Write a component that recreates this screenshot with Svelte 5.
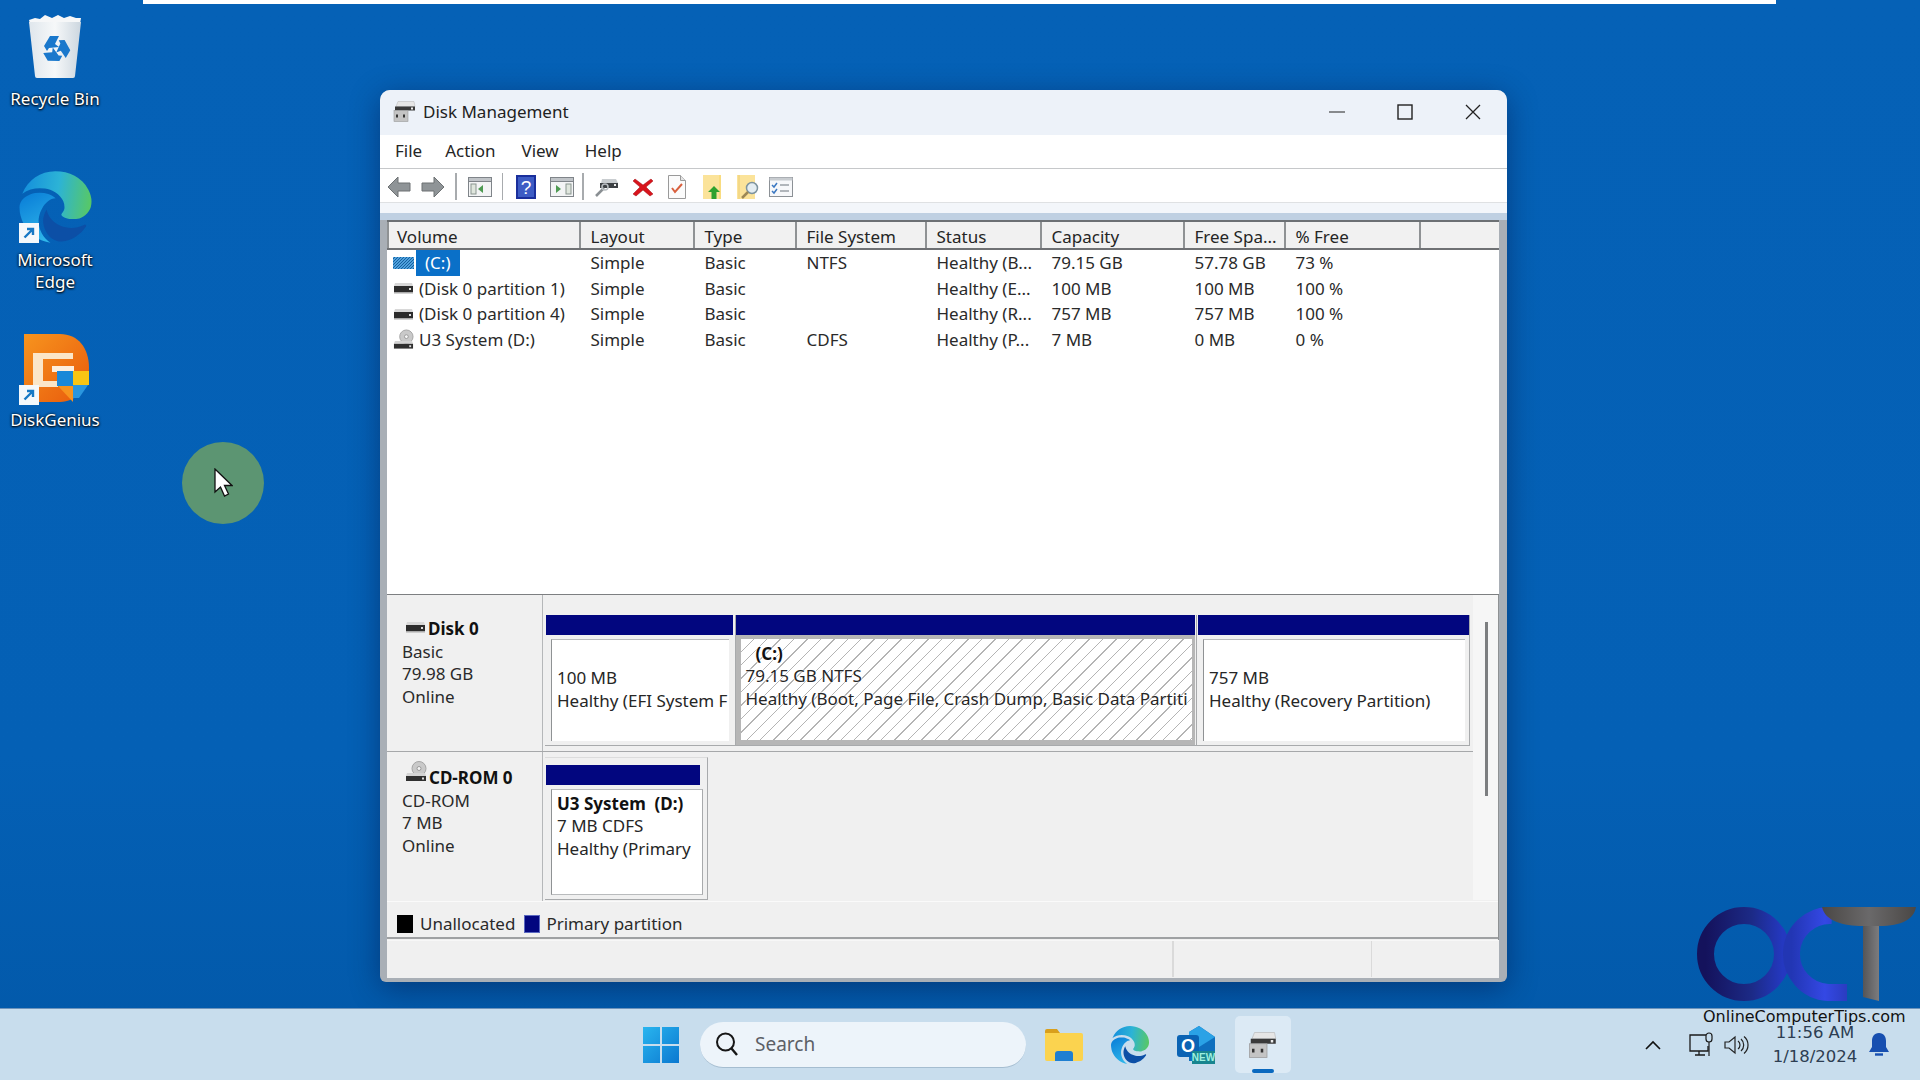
<script>
  const cols = [
    { name: 'Volume', w: 193.5 }, { name: 'Layout', w: 114 }, { name: 'Type', w: 102 },
    { name: 'File System', w: 130 }, { name: 'Status', w: 115 }, { name: 'Capacity', w: 143 },
    { name: 'Free Spa...', w: 101 }, { name: '% Free', w: 135 }
  ];
  const rows = [
    { icon: 'sel', vol: '(C:)', cells: ['Simple', 'Basic', 'NTFS', 'Healthy (B...', '79.15 GB', '57.78 GB', '73 %'] },
    { icon: 'disk', vol: '(Disk 0 partition 1)', cells: ['Simple', 'Basic', '', 'Healthy (E...', '100 MB', '100 MB', '100 %'] },
    { icon: 'disk', vol: '(Disk 0 partition 4)', cells: ['Simple', 'Basic', '', 'Healthy (R...', '757 MB', '757 MB', '100 %'] },
    { icon: 'cd', vol: 'U3 System (D:)', cells: ['Simple', 'Basic', 'CDFS', 'Healthy (P...', '7 MB', '0 MB', '0 %'] }
  ];
  const gridCols = cols.map((c) => c.w + 'px').join(' ') + ' 1fr';
</script>

{#snippet diskIcon()}
  <svg class="ico" width="21" height="14" viewBox="0 0 21 14"><path d="M2 2h17l1 3H1z" fill="#d8d8d8"/><rect x="1" y="5" width="19" height="6" fill="#2c2c2c"/><rect x="16" y="7" width="2" height="2" fill="#ddd"/><rect x="1" y="11" width="19" height="1.5" fill="#aaa"/></svg>
{/snippet}
{#snippet cdIcon()}
  <svg class="ico" width="22" height="22" viewBox="0 0 22 22"><circle cx="14" cy="7.5" r="7" fill="#c9c9c9" stroke="#a5a5a5"/><circle cx="14" cy="7.5" r="2" fill="#f5f5f5" stroke="#999"/><path d="M2 12h18l1 3H1z" fill="#d4d4d4"/><rect x="1" y="15" width="20" height="5" fill="#303030"/><rect x="17" y="16.5" width="2" height="2" fill="#ddd"/></svg>
{/snippet}
{#snippet shortcut()}
  <svg class="shortcut" viewBox="0 0 20 20"><rect width="20" height="20" fill="#f4f8fb"/><path d="M5.500 14.500 L13.500 6.500 M8 6h6v6" fill="none" stroke="#1678c4" stroke-width="2.400"/></svg>
{/snippet}
{#snippet edgeIcon(id)}
  <svg viewBox="0 0 24 24" width="100%" height="100%">
    <defs>
      <linearGradient id="top{id}" x1="0" y1="0.5" x2="1" y2="0.6"><stop offset="0" stop-color="#1590dc"/><stop offset="0.5" stop-color="#2cb3d6"/><stop offset="1" stop-color="#58c865"/></linearGradient>
      <linearGradient id="lft{id}" x1="0.2" y1="0" x2="0.6" y2="1"><stop offset="0" stop-color="#0a7fd8"/><stop offset="1" stop-color="#2fb6ea"/></linearGradient>
    </defs>
    <path fill="#0c4fa6" d="M21.860 17.860q.14 0 .25.12.1.13.1.25t-.11.33l-.32.46-.43.53-.44.5q-.21.25-.38.42l-.22.23q-.58.53-1.340 1.040-.76.51-1.600.91-.86.4-1.740.64t-1.670.24q-.9 0-1.690-.28-.8-.28-1.480-.78-.68-.5-1.220-1.170-.53-.66-.92-1.440-.38-.77-.58-1.600-.2-.83-.2-1.670 0-1 .32-1.960.33-.97.87-1.800.14.95.55 1.770.41.82 1.020 1.500.6.68 1.380 1.210.78.54 1.640.9.86.36 1.770.56.92.2 1.800.2 1.120 0 2.180-.24 1.060-.23 2.060-.72l.2-.1.2-.05z"/>
    <path fill="url(#lft{id})" d="M6.360 16.590q0 1.100.27 2.150.27 1.060.78 2.030.51.96 1.240 1.770.74.82 1.660 1.400-1.470-.2-2.800-.74-1.330-.55-2.480-1.370-1.150-.83-2.080-1.900-.92-1.070-1.580-2.330T.36 14.940Q0 13.540 0 12.060q0-.81.32-1.490.31-.68.83-1.230.53-.55 1.200-.96.66-.4 1.350-.66.74-.27 1.500-.39.78-.12 1.550-.12.7 0 1.420.1.72.12 1.400.35.68.23 1.320.57.63.35 1.160.83-.35 0-.7.07-.33.07-.65.23v-.02q-.63.28-1.200.74-.57.46-1.050 1.040-.48.58-.87 1.260-.38.67-.65 1.390-.27.71-.42 1.440-.15.72-.15 1.380z"/>
    <path fill="url(#top{id})" d="M11.960.06q1.700 0 3.330.39 1.630.38 3.070 1.150 1.430.77 2.620 1.930 1.180 1.160 1.980 2.700.49.94.76 1.960.28 1 .28 2.080 0 .89-.23 1.700-.24.8-.69 1.480-.45.68-1.100 1.220-.64.53-1.450.88-.54.24-1.110.36-.58.13-1.160.13-.42 0-.97-.03-.54-.03-1.100-.12-.55-.1-1.050-.28-.5-.19-.84-.5-.12-.09-.23-.24-.1-.16-.1-.33 0-.15.16-.35.16-.2.35-.5.2-.28.36-.68.16-.4.16-.95 0-1.060-.4-1.960-.4-.91-1.060-1.640-.66-.74-1.520-1.280-.86-.55-1.790-.89-.84-.3-1.720-.44-.87-.14-1.760-.14-1.550 0-3.060.45T.94 7.550q.71-1.740 1.810-3.130 1.100-1.380 2.520-2.350Q6.680 1.100 8.370.58q1.700-.52 3.580-.52z"/>
  </svg>
{/snippet}
{#snippet mmcIcon(w, h)}
  <svg width={w} height={h} viewBox="0 0 24 22">
    <path d="M6 1h16l1 5H4z" fill="#e6e6e6" stroke="#b5b5b5" stroke-width=".5"/><rect x="3" y="6" width="20" height="4" fill="#3a3a3a"/><rect x="19" y="7" width="2" height="2" fill="#eee"/>
    <rect x="2" y="10" width="14" height="11" fill="#c4c4c4" stroke="#9a9a9a" stroke-width=".6"/><rect x="4" y="14" width="2" height="3" fill="#333"/><rect x="11" y="14" width="2" height="3" fill="#333"/>
  </svg>
{/snippet}

<div class="desktop">
  <div class="topstrip"></div>

  <div class="deskicon recycle">
    <svg class="art" viewBox="0 0 54 64">
      <defs><linearGradient id="bin" x1="0" y1="0" x2="1" y2="0"><stop offset="0" stop-color="#dfe6ec"/><stop offset=".5" stop-color="#f6f8f9"/><stop offset="1" stop-color="#ccd6df"/></linearGradient></defs>
      <path d="M1 6l6-2 5 1 5-4 7 3 6-3 6 3 6-2 6 2 5 0-1 6H2z" fill="#f6f7f8"/>
      <path d="M1 8h52l-6 54a2 2 0 0 1-2 2H9a2 2 0 0 1-2-2z" fill="url(#bin)"/>
      <g transform="translate(28 35)" fill="#1a78cc">
        <path d="M-12 -3 L-6 -13 H3 L-1 -5 L3 -2 L-7 -1 L-9 2z"/>
        <path d="M-12 -3 L-6 -13 H3 L-1 -5 L3 -2 L-7 -1 L-9 2z" transform="rotate(120)"/>
        <path d="M-12 -3 L-6 -13 H3 L-1 -5 L3 -2 L-7 -1 L-9 2z" transform="rotate(240)"/>
      </g>
    </svg>
    <span>Recycle Bin</span>
  </div>

  <div class="deskicon edge">
    <div class="art">{@render edgeIcon('d')}</div>
    {@render shortcut()}
    <span>Microsoft<br />Edge</span>
  </div>

  <div class="deskicon genius">
    <svg class="art" viewBox="0 0 68 70">
      <defs><linearGradient id="dg" x1="0" y1="0" x2="1" y2="1"><stop offset="0" stop-color="#f7941e"/><stop offset="1" stop-color="#e8590c"/></linearGradient></defs>
      <path d="M2 1h36c18 0 29 14 29 34s-13 34-29 34H2z" fill="url(#dg)"/>
      <path d="M11 20h40v6H21v22h15v6H11z" fill="#fbe6c8"/>
      <path d="M30 33h22v6H30z" fill="#fdeedd"/>
      <path d="M35 38h16v15H35z" fill="#1a88d8"/><path d="M51 38h16v14H51z" fill="#f9c514"/><path d="M36 53h15v16z" fill="#f7931e"/><path d="M51 52h15l-9 13h-6z" fill="#2a96de"/>
    </svg>
    {@render shortcut()}
    <span>DiskGenius</span>
  </div>

  <div class="pointer">
    <svg width="20" height="30" viewBox="0 0 20 30"><path d="M2 1v23l5.500-5 4 9 4-2-4-8.500h7.500z" fill="#fff" stroke="#111" stroke-width="1.300"/></svg>
  </div>

  <section class="window">
    <header class="titlebar">
      <span class="titleicon">{@render mmcIcon(24, 23)}</span>
      <span class="title">Disk Management</span>
      <div class="controls">
        <svg width="16" height="16" viewBox="0 0 16 16"><path d="M0 8h16" stroke="#222" stroke-width="1.200"/></svg>
        <svg width="16" height="16" viewBox="0 0 16 16"><rect x="1" y="1" width="14" height="14" fill="none" stroke="#222" stroke-width="1.400"/></svg>
        <svg width="16" height="16" viewBox="0 0 16 16"><path d="M1 1l14 14M15 1L1 15" stroke="#222" stroke-width="1.300"/></svg>
      </div>
    </header>

    <nav class="menubar"><span>File</span><span class="m2">Action</span><span class="m3">View</span><span class="m4">Help</span></nav>

    <div class="toolbar">
      <svg class="t m7" width="24" height="24" viewBox="0 0 24 24"><path d="M1 12L11 2v6h12v8H11v6z" fill="#8f9497" stroke="#6d7173"/></svg>
      <svg class="t m10" width="24" height="24" viewBox="0 0 24 24"><path d="M23 12L13 2v6H1v8h12v6z" fill="#8f9497" stroke="#6d7173"/></svg>
      <i class="sep m10"></i>
      <svg class="t m11" width="24" height="20" viewBox="0 0 24 20"><rect x=".5" y=".5" width="23" height="19" fill="#f3f4f5" stroke="#7f8489"/><rect x=".5" y=".5" width="23" height="4" fill="#c0c4c8" stroke="#7f8489"/><rect x="3" y="7" width="5" height="10" fill="#dfe6dd" stroke="#8a9590"/><path d="M15 8v8l-5-4z" fill="#4e9a52"/></svg>
      <i class="sep m10"></i>
      <svg class="t m13" width="20" height="24" viewBox="0 0 20 24"><rect width="20" height="24" fill="#1a2f9c"/><rect x="2" y="2" width="16" height="20" fill="#3d5cc4"/><text x="10" y="19" text-anchor="middle" font-size="19" fill="#fff" font-family="Liberation Sans">?</text></svg>
      <svg class="t m14" width="24" height="20" viewBox="0 0 24 20"><rect x=".5" y=".5" width="23" height="19" fill="#f3f4f5" stroke="#7f8489"/><rect x=".5" y=".5" width="23" height="4" fill="#c0c4c8" stroke="#7f8489"/><rect x="16" y="7" width="5" height="10" fill="#dfe6dd" stroke="#8a9590"/><path d="M6 8v8l5-4z" fill="#4e9a52"/></svg>
      <i class="sep m8"></i>
      <svg class="t m10" width="24" height="22" viewBox="0 0 24 22"><path d="M8 3h14l2 4v5H6z" fill="#c9cdd0"/><rect x="6" y="7" width="18" height="5" fill="#3e4245"/><rect x="20" y="8" width="2" height="2" fill="#eee"/><path d="M10 12L2 20" stroke="#8a8f93" stroke-width="2.500"/><circle cx="11" cy="11" r="3" fill="none" stroke="#b9bec2" stroke-width="1.500"/></svg>
      <svg class="t m14" width="22" height="22" viewBox="0 0 22 22"><path d="M3 3l8 6 8-6 2 2-7 6 7 7-3 2-7-6-7 6-3-2 7-7-7-6z" fill="#d8141c" stroke="#a00d12" stroke-width=".5"/></svg>
      <svg class="t m14" width="18" height="24" viewBox="0 0 18 24"><path d="M.5.5h12l5 5v18H.5z" fill="#fbfbfb" stroke="#9a9a9a"/><path d="M12.500.5v5h5" fill="#e4e4e4" stroke="#9a9a9a"/><path d="M4 13l3 4 7-8" fill="none" stroke="#d9603e" stroke-width="2"/></svg>
      <svg class="t m17" width="19" height="24" viewBox="0 0 19 24"><path d="M0 0h18v24H0z" fill="#f9dc80"/><path d="M0 0h16v24H0z" fill="#fbe39a"/><path d="M11 11l6 6h-3.500v7h-5v-7H5z" fill="#2ea12f"/></svg>
      <svg class="t m15" width="22" height="24" viewBox="0 0 22 24"><path d="M0 0h18v24H0z" fill="#fbe39a"/><path d="M2 0v24" stroke="#eccd72"/><circle cx="15" cy="13" r="5.500" fill="#e4edf2" stroke="#7e949f" stroke-width="1.500"/><path d="M11 17l-6 6" stroke="#9d8856" stroke-width="2.500"/></svg>
      <svg class="t m10" width="24" height="20" viewBox="0 0 24 20"><rect x=".5" y=".5" width="23" height="19" fill="#f7f8fa" stroke="#8c9196"/><rect x=".5" y=".5" width="23" height="3" fill="#c8ccd0"/><path d="M3 8l2 2 3-4M3 14l2 2 3-4" fill="none" stroke="#3b78c2" stroke-width="1.500"/><path d="M11 8h9M11 14h9" stroke="#9aa0a6" stroke-width="1.400"/></svg>
    </div>

    <div class="toolgap"></div>

    <div class="client">
      <div class="listpane">
        <div class="hdr" style="grid-template-columns:{gridCols}">
          {#each cols as c}<div class="th">{c.name}</div>{/each}<div class="th last"></div>
        </div>
        {#each rows as r}
          <div class="row" style="grid-template-columns:{gridCols}">
            <div class="volcell">
              {#if r.icon === 'sel'}
                <svg class="ico" width="21" height="14" viewBox="0 0 21 14"><defs><pattern id="sl" width="3" height="3" patternUnits="userSpaceOnUse"><rect width="3" height="3" fill="#4ea0dc"/><path d="M0 3L3 0" stroke="#15609f"/></pattern></defs><rect x="0" y="1" width="21" height="12" fill="url(#sl)"/></svg>
                <span class="selected">(C:)</span>
              {:else if r.icon === 'disk'}
                {@render diskIcon()}<span class="vname">{r.vol}</span>
              {:else}
                {@render cdIcon()}<span class="vname">{r.vol}</span>
              {/if}
            </div>
            {#each r.cells as c}<div class="td">{c}</div>{/each}
          </div>
        {/each}
      </div>

      <div class="lower">
        <div class="scrolltrack"><i></i></div>
        <div class="diskrow first">
          <div class="label">
            <div class="lh">{@render diskIcon()}<b>Disk 0</b></div>
            <div>Basic</div><div>79.98 GB</div><div>Online</div>
          </div>
          <div class="segs">
            <div class="seg s1">
              <div class="bar"></div>
              <div class="box plain"><div class="spacer"></div><div>100 MB</div><div>Healthy (EFI System F</div></div>
            </div>
            <div class="seg s2">
              <div class="bar"></div>
              <div class="box hatch"><div class="cname"><b>(C:)</b></div><div>79.15 GB NTFS</div><div>Healthy (Boot, Page File, Crash Dump, Basic Data Partiti</div></div>
            </div>
            <div class="seg s3">
              <div class="bar"></div>
              <div class="box plain"><div class="spacer"></div><div>757 MB</div><div>Healthy (Recovery Partition)</div></div>
            </div>
          </div>
        </div>
        <div class="diskrow second">
          <div class="label">
            <div class="lh">{@render cdIcon()}<b>CD-ROM 0</b></div>
            <div>CD-ROM</div><div>7 MB</div><div>Online</div>
          </div>
          <div class="segs">
            <div class="seg cd">
              <div class="bar"></div>
              <div class="box plain"><div class="uname"><b>U3 System&nbsp; (D:)</b></div><div>7 MB CDFS</div><div>Healthy (Primary</div></div>
            </div>
          </div>
        </div>
        <div class="legend">
          <i class="sw black"></i><span class="l1">Unallocated</span>
          <i class="sw navy"></i><span class="l2">Primary partition</span>
        </div>
      </div>

      <div class="status"><i></i><i></i></div>
    </div>
  </section>

  <svg class="logo" viewBox="0 0 230 110">
    <defs>
      <linearGradient id="o" x1="0" y1="0" x2="1" y2="0"><stop offset="0" stop-color="#14125c"/><stop offset=".6" stop-color="#1c2a86"/><stop offset="1" stop-color="#2438c0"/></linearGradient>
      <linearGradient id="c" x1="0" y1="0" x2="1" y2="0"><stop offset="0" stop-color="#2236b4"/><stop offset=".6" stop-color="#3448e4"/><stop offset="1" stop-color="#2a3cc0"/></linearGradient>
      <linearGradient id="tt" x1="0" y1="0" x2="1" y2="0"><stop offset="0" stop-color="#4a4745"/><stop offset=".5" stop-color="#6a696a"/><stop offset="1" stop-color="#4a4745"/></linearGradient>
      <linearGradient id="ts" x1="0" y1="0" x2="1" y2="0"><stop offset="0" stop-color="#555557"/><stop offset="1" stop-color="#7c7c7e"/></linearGradient>
    </defs>
    <circle cx="47" cy="47" r="38.500" fill="none" stroke="url(#o)" stroke-width="17"/>
    <path d="M135 8.500A38.500 38.500 0 0 0 131 85.500L150 85.500" fill="none" stroke="url(#c)" stroke-width="17"/>
    <path d="M166 16H182V94L166 90z" fill="url(#ts)"/>
    <path d="M125 0H219C217 12 205 19 182 19H166C146 19 128 14 125 0z" fill="url(#tt)"/>
  </svg>
  <div class="wm">OnlineComputerTips.com</div>

  <footer class="taskbar">
    <svg class="start" width="36" height="36" viewBox="0 0 36 36">
      <defs><linearGradient id="w" x1="0" y1="0" x2="1" y2="1"><stop offset="0" stop-color="#29b5ef"/><stop offset="1" stop-color="#0b78d0"/></linearGradient></defs>
      <path d="M0 0h17v17H0zM19 0h17v17H19zM0 19h17v17H0zM19 19h17v17H19z" fill="url(#w)"/>
    </svg>
    <div class="search">
      <svg width="24" height="26" viewBox="0 0 24 26"><circle cx="10.500" cy="11" r="8.500" fill="none" stroke="#161616" stroke-width="2"/><path d="M16.500 17.500L22 24" stroke="#161616" stroke-width="2.400"/></svg>
      <span>Search</span>
    </div>
    <svg class="app a1" width="38" height="32" viewBox="0 0 38 32"><path d="M0 2a2 2 0 0 1 2-2h10l3 4H0z" fill="#d99f1c"/><path d="M0 4h36a2 2 0 0 1 2 2v24a2 2 0 0 1-2 2H2a2 2 0 0 1-2-2z" fill="#fbd34f"/><path d="M10 32v-7a3 3 0 0 1 3-3h12a3 3 0 0 1 3 3v7z" fill="#1f7fd1"/></svg>
    <div class="app a2 edgebar">{@render edgeIcon('t')}</div>
    <svg class="app a2" width="38" height="38" viewBox="0 0 38 38"><path d="M22 0l16 11v18a6 6 0 0 1-6 6H12V6z" fill="#0f6fbe"/><path d="M22 0l16 11-16 10-10-6V6z" fill="#2aa2e6"/><rect x="0" y="9" width="22" height="22" rx="3" fill="#0a63b4"/><text x="11" y="26" text-anchor="middle" font-size="18" font-weight="700" fill="#fff" font-family="Liberation Sans">O</text><rect x="15" y="25" width="23" height="13" fill="#18858f"/><text x="26.500" y="35" text-anchor="middle" font-size="10" font-weight="700" fill="#9ef0e0" font-family="Liberation Sans">NEW</text></svg>
    <div class="active">
      <span class="activeicon">{@render mmcIcon(30, 28)}</span>
      <i></i>
    </div>
    <div class="tray">
      <svg class="chev" width="16" height="10" viewBox="0 0 16 10"><path d="M1 9l7-7 7 7" fill="none" stroke="#111" stroke-width="1.600"/></svg>
      <svg class="net" width="25" height="25" viewBox="0 0 25 25"><path d="M17 3H1v16h18v-5" fill="none" stroke="#1a1a1a" stroke-width="1.300"/><path d="M6 23h10M10 19v4" stroke="#1a1a1a" stroke-width="1.300"/><rect x="17" y="1" width="6" height="9" rx="3" fill="none" stroke="#1a1a1a" stroke-width="1.200"/><path d="M20 10v14" stroke="#1a1a1a" stroke-width="1.200"/></svg>
      <svg class="vol" width="25" height="20" viewBox="0 0 25 20"><path d="M1 7h4l6-5v16l-6-5H1z" fill="none" stroke="#222" stroke-width="1.200"/><path d="M14 6a5 5 0 0 1 0 8M17 4a8 8 0 0 1 0 12M20 1.500a11 11 0 0 1 0 17" fill="none" stroke="#222" stroke-width="1.200"/></svg>
      <div class="clock"><div>11:56 AM</div><div>1/18/2024</div></div>
      <svg class="bell" width="22" height="24" viewBox="0 0 22 24"><path d="M11 0c5 0 7 4 7 8v6l3 5H1l3-5V8c0-4 2-8 7-8z" fill="#174fb0"/><path d="M7 21.500h8" stroke="#174fb0" stroke-width="2.400"/></svg>
    </div>
  </footer>
</div>

<style>
  :global(body) { margin: 0; overflow: hidden; }
  :global(#app) { width: 1920px; height: 1080px; }
  .desktop {
    position: relative; width: 1920px; height: 1080px; overflow: hidden;
    background: linear-gradient(180deg, #0561b6 0%, #0460b5 70%, #0258a8 100%);
    font-family: "Noto Sans", "Open Sans", sans-serif;
  }
  .topstrip { position: absolute; left: 143px; top: 0; width: 1633px; height: 4px; background: #fff; }

  .deskicon { position: absolute; left: 0; color: #fff; font-size: 17px; line-height: 22px; text-align: center; text-shadow: 0 1px 2px #000, 0 0 3px #000; width: 110px; }
  .deskicon span { position: absolute; left: 0; right: 0; }
  .deskicon .art { position: absolute; display: block; }
  .recycle { top: 14px; }
  .recycle .art { left: 28px; top: 0; width: 54px; height: 64px; }
  .recycle span { top: 74px; }
  .edge { top: 171px; }
  .edge .art { left: 19px; top: 0; width: 73px; height: 72px; }
  .edge span { top: 78px; }
  .genius { top: 333px; }
  .genius .art { left: 22px; top: 0; width: 68px; height: 70px; }
  .genius span { top: 76px; }
  .shortcut { position: absolute; left: 19px; top: 52px; width: 20px; height: 20px; }
  .pointer { position: absolute; left: 182px; top: 442px; width: 82px; height: 82px; border-radius: 50%; background: #5c9572; display: flex; align-items: center; justify-content: center; }

  .window {
    position: absolute; left: 380px; top: 90px; width: 1127px; height: 892px;
    border-radius: 10px 10px 6px 6px; overflow: hidden; background: #a9afb6;
    display: flex; flex-direction: column; color: #1b1b1b; font-size: 17px;
    box-shadow: 0 6px 30px rgba(0, 0, 40, .38);
  }
  .titlebar { height: 45px; flex: none; background: #edf2f9; display: flex; align-items: center; padding: 0 0 2px 12px; box-sizing: border-box; }
  .titleicon { display: flex; width: 31px; }
  .title { font-size: 17px; color: #222; }
  .controls { margin-left: auto; display: flex; align-items: center; gap: 52px; padding-right: 26px; }
  .controls svg { display: block; }
  .menubar { height: 34px; flex: none; background: #fff; border-bottom: 1.500px solid #c6c8ca; display: flex; align-items: center; padding: 0 0 2px 15px; box-sizing: border-box; font-size: 17px; color: #252525; }
  .m2 { margin-left: 23px; }
  .m3 { margin-left: 26px; }
  .m4 { margin-left: 26px; }
  .toolbar { height: 34px; flex: none; background: #fff; border-bottom: 1px solid #dfe1e3; display: flex; align-items: center; box-sizing: border-box; padding-top: 2px; }
  .t { display: block; flex: none; }
  .m7 { margin-left: 7px; }
  .m8 { margin-left: 8px; }
  .m10 { margin-left: 10px; }
  .m11 { margin-left: 11px; }
  .m13 { margin-left: 13px; }
  .m14 { margin-left: 14px; }
  .m15 { margin-left: 15px; }
  .m17 { margin-left: 17px; }
  .sep { width: 1.500px; height: 27px; background: #a8abae; flex: none; }
  .toolgap { height: 10px; flex: none; background: #f3f6fa; }
  .client { flex: 1; min-height: 0; display: flex; flex-direction: column; background: linear-gradient(180deg, #bfd0e2 0, #bfd0e2 7px, transparent 7px); padding: 7px 8px 4px 7px; box-sizing: border-box; }

  .listpane { height: 375px; flex: none; background: #fff; overflow: hidden; border-bottom: 1.500px solid #7d7f81; box-sizing: border-box; }
  .hdr { display: grid; height: 30px; box-sizing: border-box; border-top: 2px solid #6c7074; border-bottom: 2px solid #6f7174; background: #f1f1f1; }
  .th { border-right: 2px solid #8f9294; padding-left: 10px; line-height: 29px; white-space: nowrap; overflow: hidden; color: #252525; }
  .th:first-child { border-left: 2px solid #8f9294; padding-left: 8px; }
  .th.last { border-right: 0; }
  .row { display: grid; height: 25.600px; line-height: 25.600px; color: #2a2a2a; }
  .td { padding-left: 10px; white-space: nowrap; overflow: hidden; }
  .volcell { display: flex; align-items: center; padding-left: 6px; position: relative; white-space: nowrap; }
  .ico { display: block; flex: none; }
  .volcell .ico { width: 21px; }
  .selected { background: #0a70c8; color: #fff; margin-left: 2px; padding: 0 5px 0 9px; height: 25.600px; width: 30px; }
  .vname { margin-left: 5px; }

  .lower { flex: 1; min-height: 0; background: #f0f0f0; display: flex; flex-direction: column; position: relative; border-right: 1.500px solid #8f9294; }
  .scrolltrack { position: absolute; right: 0; top: 0; width: 25px; height: 305px; background: #f6f6f6; }
  .scrolltrack i { position: absolute; left: 12px; top: 27px; width: 2.500px; height: 174px; background: #7c7e80; }
  .diskrow { display: flex; height: 150px; flex: none; border-bottom: 1.500px solid #a6a8aa; box-sizing: border-box; margin-right: 24px; }
  .diskrow.first { height: 157px; }
  .first .segs { padding-top: 20px; }
  .label { width: 156px; flex: none; box-sizing: border-box; padding: 15px 0 0 15px; line-height: 22.600px; border-right: 1.500px solid #b5b7b9; color: #2a2a2a; }
  .first .label { padding-top: 23px; }
  .lh { display: flex; align-items: flex-end; gap: 2px; color: #111; font-weight: 700; margin-left: 3px; height: 22.600px; }
  .lh b { font-weight: 700; }
  .lh .ico { margin-bottom: 7px; }
  .segs { display: flex; padding: 19px 0 0 2px; flex: 1; min-width: 0; }
  .seg { flex: none; display: flex; flex-direction: column; height: 131px; box-sizing: border-box; background: #f0f0f0; border-right: 1.500px solid #a8aaac; border-bottom: 1.500px solid #a8aaac; }
  .s1 { width: 190.500px; padding: 0 2px 0 1px; }
  .s2 { width: 461px; padding: 0 1px 0 0; }
  .s3 { width: 273px; padding: 0 0 0 1.500px; }
  .seg.cd { width: 163px; height: 143px; margin-top: -14px; padding: 7px 7px 0 1px; border-top: 1.500px solid #dcdcdc; box-sizing: border-box; }
  .bar { height: 20px; flex: none; background: #02067f; }
  .box { margin: 4px 0 4px 5px; height: 102px; box-sizing: border-box; background: #fff; line-height: 22.800px; padding-left: 5px; overflow: hidden; white-space: nowrap; color: #262626; flex: none; }
  .box.plain { border-left: 1.500px solid #8f9294; border-top: 1.500px solid #b9bbbd; margin-right: 4px; }
  .box.hatch {
    margin: 0; height: 110px; border-style: solid; border-color: #b6b6b6; border-width: 4px 3px 5px 5px; padding: 2px 0 0 5px;
    background: repeating-linear-gradient(135deg, #fff 0, #fff 8.500px, #b4b4b4 8.500px, #b4b4b4 9.500px);
    text-shadow: 0 0 2px #fff, 0 0 2px #fff, 0 0 3px #fff;
  }
  .spacer { height: 27px; }
  .cname { padding: 2px 0 0 10px; height: 24px; box-sizing: border-box; color: #111; }
  .uname { color: #111; padding-top: 2.500px; }
  .seg.cd .box { height: 106px; margin: 4px -3px 0 5px; border-right: 1.500px solid #a8aaac; border-bottom: 1.500px solid #b9bbbd; }
  .legend { flex: none; height: 38px; display: flex; align-items: center; border-top: 1px solid #fafafa; border-bottom: 2px solid #9fa1a3; box-sizing: border-box; margin-top: -1px; padding: 8px 0 0 10px; position: relative; background: #f0f0f0; }
  .sw { width: 16px; height: 18px; flex: none; }
  .black { background: #000; }
  .navy { background: #02067f; border: 1px solid #5a68c0; box-sizing: border-box; }
  .l1 { margin: 0 9px 0 7px; color: #2a2a2a; }
  .l2 { margin-left: 6px; color: #2a2a2a; }
  .status { flex: none; height: 38px; background: #f0f0f0; display: flex; justify-content: flex-end; position: relative; border-top: 1px solid #f7f7f7; box-sizing: border-box; }
  .status i { width: 1.500px; background: #dadada; height: 36px; }
  .status i:first-child { margin-right: 197px; }
  .status i:last-child { margin-right: 127px; }

  .logo { position: absolute; left: 1697px; top: 907px; width: 230px; height: 110px; }
  .wm { position: absolute; left: 1703px; top: 1006px; font-family: "DejaVu Sans", sans-serif; font-size: 16px; line-height: 22px; color: #111; white-space: nowrap; z-index: 2; }

  .taskbar { position: absolute; left: 0; right: 0; top: 1008px; height: 72px; background: #c8dded; border-top: 1px solid #6d93bb; box-sizing: border-box; display: flex; align-items: center; padding-left: 643px; }
  .start { display: block; flex: none; }
  .search { margin-left: 21px; width: 326px; height: 46px; flex: none; box-sizing: border-box; background: #edf4fa; border-radius: 23px; border-bottom: 1.500px solid #a5bdd0; display: flex; align-items: center; padding-left: 15px; color: #5c6066; font-size: 19px; }
  .search span { margin-left: 16px; }
  .app { display: block; flex: none; }
  .a1 { margin-left: 19px; }
  .a2 { margin-left: 28px; }
  .edgebar { width: 38px; height: 38px; }
  .active { margin-left: 20px; width: 56px; height: 57px; flex: none; background: #dceaf5; border-radius: 5px; display: flex; align-items: center; justify-content: center; position: relative; }
  .activeicon { display: flex; margin-right: 3px; }
  .active i { position: absolute; left: 17px; bottom: 0; width: 22px; height: 4px; border-radius: 2px; background: #0a69bf; }
  .tray { margin-left: 354px; display: flex; align-items: center; flex: none; height: 100%; }
  .chev { display: block; }
  .net { display: block; margin-left: 28px; }
  .vol { display: block; margin-left: 10px; }
  .clock { width: 110px; margin-left: 11px; text-align: center; font-family: "DejaVu Sans", "Noto Sans", sans-serif; font-size: 16.500px; line-height: 23.500px; color: #2d3e52; }
  .bell { display: block; margin-left: -2px; }
</style>
